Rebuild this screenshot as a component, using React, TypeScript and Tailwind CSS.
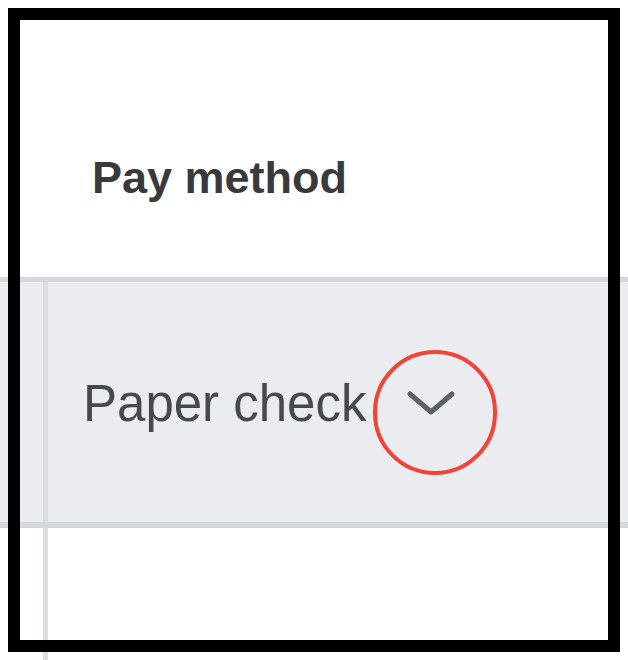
// Pay method column, zoomed in, with the method dropdown called out
function Chevron() {
  return (
    <svg
      width="50"
      height="26"
      viewBox="0 0 50 26"
      fill="none"
      stroke="#5d6066"
      strokeWidth="5"
      strokeLinecap="round"
      strokeLinejoin="round"
      className="ml-[39px] mt-[12px] shrink-0"
    >
      <polyline points="4,4 25,22 46,4" />
    </svg>
  );
}

export default function App() {
  return (
    <div
      className="relative h-[660px] w-[628px] overflow-hidden bg-white"
      style={{ fontFamily: '"Liberation Sans", Arial, sans-serif' }}
    >
      {/* header */}
      <div className="flex h-[277px] items-start">
        <div className="w-[48px] shrink-0" />
        <div className="pl-[44px] pt-[155px] text-[45px] font-bold leading-none text-[#393a3d]">
          Pay method
        </div>
      </div>
      <div className="h-[5px] bg-[#d5d8dc]" />

      {/* row */}
      <div className="flex h-[240px] bg-[#ebecf0]">
        <div className="w-[43px] shrink-0" />
        <div className="w-[5px] shrink-0 bg-[#d9dbdf]" />
        <div className="flex items-start pl-[35px] pt-[96px]">
          <span className="whitespace-nowrap text-[51px] leading-none text-[#46494e]">
            Paper check
          </span>
          <Chevron />
        </div>
      </div>
      <div className="h-[6px] bg-[#d5d8dc]" />

      {/* next row, empty */}
      <div className="flex h-[132px]">
        <div className="w-[43px] shrink-0" />
        <div className="w-[5px] shrink-0 bg-[#dcdee2]" />
      </div>

      {/* frame and callout */}
      <div className="pointer-events-none absolute left-[8px] top-[8px] h-[644px] w-[612px] border-[12px] border-black" />
      <div className="pointer-events-none absolute left-[373px] top-[350px] h-[125px] w-[124px] rounded-full border-4 border-[#f44336]" />
    </div>
  );
}
